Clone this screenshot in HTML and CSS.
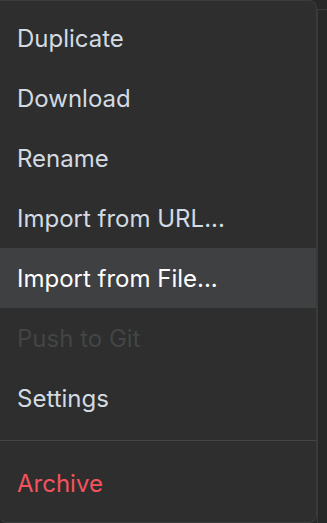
FILE: index.html
```html
<!DOCTYPE html>
<html lang="en">
<head>
    <meta charset="UTF-8">
    <meta name="viewport" content="width=device-width, initial-scale=1.0">
    <title>Menu</title>
    <link rel="stylesheet" href="styles.css">
</head>
<body>
    <div class="menu">
        <div class="menu-group">
            <a class="menu-item">Duplicate</a>
            <a class="menu-item">Download</a>
            <a class="menu-item">Rename</a>
            <a class="menu-item">Import from URL...</a>
            <a class="menu-item active">Import from File...</a>
            <a class="menu-item disabled">Push to Git</a>
            <a class="menu-item">Settings</a>
        </div>
        <div class="menu-divider"></div>
        <div class="menu-group last">
            <a class="menu-item danger">Archive</a>
        </div>
    </div>
    <div class="backdrop"></div>
</body>
</html>
```

FILE: styles.css
```css
:root {
    --menu-background: #2d2e2d;
    --menu-border: #3b3c3c;
    --item-text: #d3dae2;
    --item-hover: #3f4041;
    --disabled-text: #434545;
    --danger-color: #f4535e;
    --page-background: #262727;
}
html, body {
    height: 100%;
}
body {
    margin: 0;
    background: var(--page-background);
    font-family: "Inter", "Liberation Sans", sans-serif;
    display: flex;
    overflow: hidden;
}
.menu {
    width: 317px;
    flex-shrink: 0;
    box-sizing: border-box;
    background: var(--menu-background);
    border: 1px solid var(--menu-border);
    border-left: none;
    border-radius: 0 8px 8px 6px;
    display: flex;
    flex-direction: column;
}
.menu-group {
    padding: 7px 0 12px;
}
.menu-group.last {
    padding: 12px 0 8px;
}
.menu-item {
    display: flex;
    align-items: center;
    height: 60px;
    padding: 0 17px;
    font-size: 24px;
    color: var(--item-text);
    cursor: pointer;
}
.menu-item.active {
    background: var(--item-hover);
    color: #ffffff;
}
.menu-item.disabled {
    color: var(--disabled-text);
    cursor: default;
}
.menu-item.danger {
    color: var(--danger-color);
}
.menu-divider {
    height: 1px;
    background: #444546;
}
.backdrop {
    flex: 1;
    margin-top: 9px;
    border-top: 1px solid #383939;
    border-left: 1px solid #383939;
}
```
